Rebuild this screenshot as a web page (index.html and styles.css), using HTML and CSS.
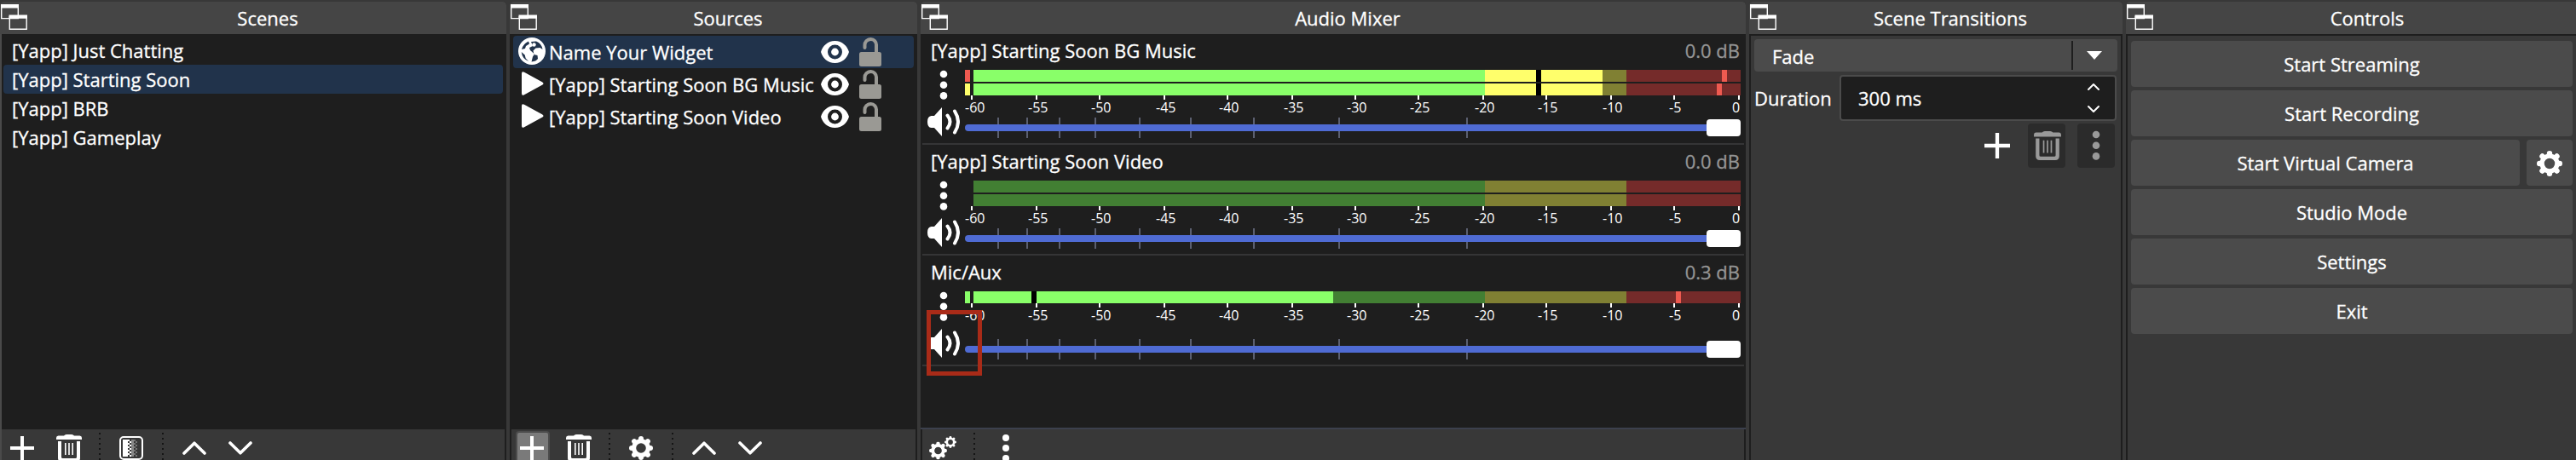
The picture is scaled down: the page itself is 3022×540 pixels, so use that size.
FILE: index.html
```html
<!DOCTYPE html>
<html lang="en">
<head>
<meta charset="utf-8">
<title>Docks</title>
<link rel="stylesheet" href="styles.css">
</head>
<body>
<svg class="defs" width="0" height="0">
  <defs>
    <symbol id="float" viewBox="0 0 31 30">
      <path fill="none" stroke="#fff" stroke-width="1.4" d="M.7 1v15.6H20.3V1M10.3 14v15.3H30.2V14"/>
      <path fill="#fff" d="M0 0h21v4.5H0zM9.5 12.6h21.5v4.2H9.500z"/>
    </symbol>
    <symbol id="plus" viewBox="0 0 28 28"><path fill="currentColor" d="M12 0h4v12h12v4H16v12h-4V16H0v-4h12z"/></symbol>
    <symbol id="trash" viewBox="0 0 30 32">
      <path fill="currentColor" d="M9 1.500Q10 0 12 0h6q2 0 3 1.500h6.500Q30 1.700 30 4v2H0V4q0-2.300 2.500-2.500z"/>
      <path fill="currentColor" d="M2 8h4v18.500q0 1.500 1.500 1.500h15q1.500 0 1.500-1.500V8h4v19.500q0 4.500-4.500 4.500h-17Q2 32 2 27.500z"/>
      <path stroke="currentColor" stroke-width="1.600" d="M10.800 10v14M15 10v14M19.200 10v14"/>
    </symbol>
    <symbol id="up" viewBox="0 0 28 16"><path fill="none" stroke="currentColor" stroke-width="3.600" stroke-linecap="round" stroke-linejoin="round" d="M2 14 14 2.200 26 14"/></symbol>
    <symbol id="down" viewBox="0 0 28 16"><path fill="none" stroke="currentColor" stroke-width="3.600" stroke-linecap="round" stroke-linejoin="round" d="M2 2l12 11.800L26 2"/></symbol>
    <symbol id="gear" viewBox="-15 -15 30 30">
      <circle r="8.900" fill="none" stroke="currentColor" stroke-width="5.400"/>
      <g stroke="currentColor" stroke-width="6.400" stroke-linecap="round">
        <path d="M0-11V-11.800M0 11V11.800M-11 0H-11.800M11 0H11.800M8-8l.5-.5M-8 8l-.5.500M8 8l.5.500M-8-8l-.5-.5"/>
      </g>
    </symbol>
    <symbol id="dots" viewBox="0 0 10 36"><g fill="currentColor"><circle cx="5" cy="5" r="4.300"/><circle cx="5" cy="17.700" r="4.300"/><circle cx="5" cy="30.400" r="4.300"/></g></symbol>
    <symbol id="eye" viewBox="0 0 33 26">
      <path fill="#fff" fill-rule="evenodd" d="M16.500 0C25 0 31 6 33 13 31 20 25 26 16.500 26S2 20 0 13C2 6 8 0 16.500 0zm0 4.500a8.500 8.500 0 1 0 0 17 8.500 8.500 0 0 0 0-17z"/>
      <circle cx="16.500" cy="13" r="4.400" fill="#fff"/>
    </symbol>
    <symbol id="lock" viewBox="0 0 26 34">
      <path fill="none" stroke="#9a9994" stroke-width="4" d="M6.500 12V9.500a7 7 0 0 1 7-7.500h0a6.500 6.500 0 0 1 6.500 7V18" stroke-linecap="round"/>
      <rect y="17" width="26" height="17" rx="2.500" fill="#9a9994"/>
    </symbol>
    <symbol id="play" viewBox="0 0 26 28"><path fill="#fff" d="M0 2.500Q0-1 3 .8L24 12.200q3 1.800 0 3.600L3 27.200Q0 29 0 25.500z"/></symbol>
    <symbol id="globe" viewBox="0 0 32 32">
      <circle cx="16" cy="16" r="16" fill="#fff"/>
      <path fill="#21334b" d="M4 14Q5.500 7.500 12 4.500l1 3-4 2.500-1 3zM3.700 17l4 3.500 1 4 3.500 3.500Q4.500 25 3.700 17zM15 5l6-.5Q27.500 7 28.500 14l-3-2-5 .5-3 3 1 4.500 4 1 .5 4q-2 3-7.500 3.500l1.500-6 2-3-5-4.500-1-3 4-2z"/>
      <circle cx="18.500" cy="8.500" r="2.200" fill="#fff"/>
    </symbol>
    <symbol id="speaker" viewBox="0 0 38 34">
      <path fill="#fff" d="M17 0v34L8 24H4.500Q0 23.500 0 17t4.500-7H8z"/>
      <path fill="none" stroke="#fff" stroke-width="4" stroke-linecap="round" d="M23.500 9.500q6 7.500 0 15M32 4.500q8 12.500 0 25"/>
    </symbol>
    <g id="marks"><path stroke="#fff" stroke-width="2" d="M8 0v5M84 0v5M158 0v5M234 0v5M308 0v5M384 0v5M458 0v5M532 0v5M608 0v5M682 0v5M758 0v5M832 0v5M908 0v5"/></g>
    <g id="slider">
      <path stroke="#5b5f70" stroke-width="2" d="M39 56v24M73 56v24M111 56v24M153 56v24M205 56v24M265 56v24M339 56v24M439 56v24M589 56v24"/>
      <rect y="64" width="890" height="8" rx="4" fill="#4f6bd3"/>
      <rect x="870" y="58" width="40" height="20" rx="4" fill="#fff"/>
    </g>
    <g id="dim"><path fill="#427f33" d="M10 0h600v14H10z"/><path fill="#808033" d="M610 0h166v14H610z"/><path fill="#752b2a" d="M776 0h134v14H776z"/></g>
  </defs>
</svg>
<main class="docks">
  <section class="dock scenes">
    <header class="title"><svg class="float"><use href="#float"/></svg><h2>Scenes</h2></header>
    <ul class="list">
      <li>[Yapp] Just Chatting</li>
      <li class="selected">[Yapp] Starting Soon</li>
      <li>[Yapp] BRB</li>
      <li>[Yapp] Gameplay</li>
    </ul>
    <footer class="toolbar">
      <svg class="i-plus"><use href="#plus"/></svg>
      <svg class="i-trash"><use href="#trash"/></svg>
      <i class="sep"></i>
      <svg class="i-filter" viewBox="0 0 28 28">
        <rect x="1" y="1" width="26" height="26" rx="4" fill="none" stroke="#fff" stroke-width="2"/>
        <path fill="#fff" d="M4 4h6v20H4z"/>
        <path stroke="#fff" stroke-width="2" stroke-dasharray="2 2" d="M11 4v20M13 6v18"/>
        <path stroke="#888" stroke-width="3" d="M15.500 4v20"/>
        <path stroke="#777" stroke-width="2" stroke-dasharray="2 2" d="M18 4v20M20 6v18"/>
      </svg>
      <i class="sep"></i>
      <svg class="i-chev"><use href="#up"/></svg>
      <svg class="i-chev"><use href="#down"/></svg>
    </footer>
  </section>

  <section class="dock sources">
    <header class="title"><svg class="float"><use href="#float"/></svg><h2>Sources</h2></header>
    <ul class="list">
      <li class="selected"><svg class="globe"><use href="#globe"/></svg><span>Name Your Widget</span><svg class="eye"><use href="#eye"/></svg><svg class="lock"><use href="#lock"/></svg></li>
      <li><svg class="play"><use href="#play"/></svg><span>[Yapp] Starting Soon BG Music</span><svg class="eye"><use href="#eye"/></svg><svg class="lock"><use href="#lock"/></svg></li>
      <li><svg class="play"><use href="#play"/></svg><span>[Yapp] Starting Soon Video</span><svg class="eye"><use href="#eye"/></svg><svg class="lock"><use href="#lock"/></svg></li>
    </ul>
    <footer class="toolbar">
      <div class="pressed"><svg class="i-plus"><use href="#plus"/></svg></div>
      <svg class="i-trash"><use href="#trash"/></svg>
      <i class="sep"></i>
      <svg class="i-gear"><use href="#gear"/></svg>
      <i class="sep"></i>
      <svg class="i-chev"><use href="#up"/></svg>
      <svg class="i-chev"><use href="#down"/></svg>
    </footer>
  </section>

  <section class="dock mixer">
    <header class="title"><svg class="float"><use href="#float"/></svg><h2>Audio Mixer</h2></header>
    <div class="channels">
      <article class="channel">
        <div class="name"><span>[Yapp] Starting Soon BG Music</span><span class="db">0.0 dB</span></div>
        <div class="body">
          <div class="side"><svg class="dots"><use href="#dots"/></svg><svg class="speaker"><use href="#speaker"/></svg></div>
          <svg class="meter" viewBox="0 0 910 86">
            <use href="#dim"/><use href="#dim" y="16"/>
            <path fill="#ee5a50" d="M0 0h6v14H0zM888 0h6v14h-6zM882 16h6v14h-6z"/>
            <path fill="#ffff6b" d="M0 16h6v14H0zM610 0h138v14H610zM610 16h138v14H610z"/>
            <path fill="#89ff69" d="M10 0h600v14H10zM10 16h600v14H10z"/>
            <path d="M670 0h6v14h-6zM670 16h6v14h-6z"/>
            <use href="#marks" y="30"/>
            <g class="labels"><text x="0" y="50">-60</text><text x="74" y="50">-55</text><text x="148" y="50">-50</text><text x="224" y="50">-45</text><text x="298" y="50">-40</text><text x="374" y="50">-35</text><text x="448" y="50">-30</text><text x="522" y="50">-25</text><text x="598" y="50">-20</text><text x="672" y="50">-15</text><text x="748" y="50">-10</text><text x="826" y="50">-5</text><text x="900" y="50">0</text></g>
            <use href="#slider"/>
          </svg>
        </div>
      </article>
      <article class="channel">
        <div class="name"><span>[Yapp] Starting Soon Video</span><span class="db">0.0 dB</span></div>
        <div class="body">
          <div class="side"><svg class="dots"><use href="#dots"/></svg><svg class="speaker"><use href="#speaker"/></svg></div>
          <svg class="meter" viewBox="0 0 910 86">
            <use href="#dim"/><use href="#dim" y="16"/>
            <use href="#marks" y="30"/>
            <g class="labels"><text x="0" y="50">-60</text><text x="74" y="50">-55</text><text x="148" y="50">-50</text><text x="224" y="50">-45</text><text x="298" y="50">-40</text><text x="374" y="50">-35</text><text x="448" y="50">-30</text><text x="522" y="50">-25</text><text x="598" y="50">-20</text><text x="672" y="50">-15</text><text x="748" y="50">-10</text><text x="826" y="50">-5</text><text x="900" y="50">0</text></g>
            <use href="#slider"/>
          </svg>
        </div>
      </article>
      <article class="channel">
        <div class="name"><span>Mic/Aux</span><span class="db">0.3 dB</span></div>
        <div class="body">
          <div class="side"><svg class="dots"><use href="#dots"/></svg><svg class="speaker"><use href="#speaker"/></svg></div>
          <svg class="meter" viewBox="0 0 910 86">
            <use href="#dim"/>
            <path fill="#89ff69" d="M0 0h6v14H0zM10 0h422v14H10z"/>
            <path d="M78 0h6v14h-6z"/>
            <path fill="#ee5a50" d="M834 0h6v14h-6z"/>
            <use href="#marks" y="14"/>
            <g class="labels"><text x="0" y="34">-60</text><text x="74" y="34">-55</text><text x="148" y="34">-50</text><text x="224" y="34">-45</text><text x="298" y="34">-40</text><text x="374" y="34">-35</text><text x="448" y="34">-30</text><text x="522" y="34">-25</text><text x="598" y="34">-20</text><text x="672" y="34">-15</text><text x="748" y="34">-10</text><text x="826" y="34">-5</text><text x="900" y="34">0</text></g>
            <use href="#slider"/>
          </svg>
          <span class="highlight"></span>
        </div>
      </article>
    </div>
    <footer class="toolbar">
      <svg class="i-gears" viewBox="0 0 32 28"><use href="#gear" x="0" y="6.500" width="21" height="21"/><use href="#gear" x="18" y="0" width="14" height="14"/></svg>
      <i class="sep"></i>
      <svg class="i-dots" viewBox="0 0 8 32"><g fill="#fff"><circle cx="4" cy="4" r="4"/><circle cx="4" cy="16" r="4"/><circle cx="4" cy="28" r="4"/></g></svg>
    </footer>
  </section>

  <section class="dock transitions">
    <header class="title"><svg class="float"><use href="#float"/></svg><h2>Scene Transitions</h2></header>
    <div class="panel">
      <div class="combo"><span>Fade</span><svg class="arrow" viewBox="0 0 18 10"><path fill="#fff" d="M0 0h18L9 10z"/></svg></div>
      <div class="duration"><label>Duration</label>
        <div class="spin"><span>300 ms</span>
          <svg class="steps" viewBox="0 0 16 36"><path fill="none" stroke="#fff" stroke-width="2" stroke-linecap="round" stroke-linejoin="round" d="M2 8l6-6 6 6M2 28l6 6 6-6"/></svg>
        </div>
      </div>
      <div class="actions">
        <svg class="add"><use href="#plus"/></svg>
        <span class="off"><svg class="bin"><use href="#trash"/></svg></span>
        <span class="off"><svg class="more"><use href="#dots"/></svg></span>
      </div>
    </div>
  </section>

  <section class="dock controls">
    <header class="title"><svg class="float"><use href="#float"/></svg><h2>Controls</h2></header>
    <div class="panel">
      <button>Start Streaming</button>
      <button>Start Recording</button>
      <div class="pair"><button>Start Virtual Camera</button><button class="cfg"><svg><use href="#gear"/></svg></button></div>
      <button>Studio Mode</button>
      <button>Settings</button>
      <button>Exit</button>
    </div>
  </section>
</main>
</body>
</html>
```
FILE: styles.css
```css
* { box-sizing: border-box; margin: 0; padding: 0; }
body {
  width: 3022px; height: 540px; overflow: hidden;
  background: #383838; color: #fff;
  font: 22px/30px "Open Sans", "Noto Sans", sans-serif;
  -webkit-text-stroke: .3px;
}
svg { display: block; flex: none; color: #fff; }
.defs { position: absolute; }
.docks {
  display: grid; height: 540px; padding-top: 2px; column-gap: 4px;
  grid-template-columns: 594px 478px 968px 438px 532px;
}
.dock { display: flex; flex-direction: column; min-width: 0; background: #1e1e1e; border-radius: 4px 4px 0 0; }
.title { display: flex; height: 38px; background: #454545; border-radius: 4px 4px 0 0; padding-left: 1px; }
.title h2 { flex: 1; font-size: 22px; font-weight: 400; line-height: 39px; text-align: center; padding-left: 2px; }
.float { width: 31px; height: 30px; margin-top: 3px; }

.list { list-style: none; flex: 1; padding: 2px 4px 0; }
.scenes .list { border-left: 2px solid #4a4a4a; padding-left: 2px; }
.scenes li { height: 34px; line-height: 35px; padding-left: 10px; border-radius: 4px; }
.sources li { display: flex; align-items: center; height: 38px; border-radius: 4px; padding-left: 6px; }
.list .selected { background: #21334b; }
.sources li span { width: 319px; margin-left: 4px; white-space: nowrap; }
.globe { width: 32px; height: 32px; margin-top: -3px; }
.play { width: 26px; height: 28px; margin: -2px 2px 0 4px; }
.eye { width: 33px; height: 26px; }
.lock { width: 26px; height: 34px; margin-left: 12px; }

.toolbar { display: flex; height: 36px; margin: 0 2px; padding-top: 4px; background: #383838; overflow: hidden; }
.scenes .toolbar { padding-left: 10px; margin-left: 0; border-left: 2px solid #4a4a4a; }
.i-plus { width: 28px; height: 28px; margin-top: 4px; }
.i-trash { width: 30px; height: 32px; margin: 2px 20px 0 26px; }
.sep { width: 2px; height: 32px; background: repeating-linear-gradient(#141414 0 2px, transparent 2px 6px); }
.i-filter { width: 28px; height: 28px; margin: 4px 22px 0; }
.i-gear { width: 28px; height: 28px; margin: 4px 22px 0; }
.i-chev { width: 28px; height: 16px; margin: 10px 4px 0 22px; }
.pressed { width: 40px; height: 40px; margin: -2px -7px 0 5px; background: #7a7a7a; border: 2px solid #4c4c4c; border-radius: 4px; padding-left: 3px; flex: none; }

.channels { flex: 1; border-bottom: 2px solid #3c404d; }
.channel { height: 130px; margin: 0 2px; border-bottom: 2px solid #353536; }
.name { display: flex; justify-content: space-between; height: 42px; padding: 0 5px 0 10px; line-height: 39px; }
.db { color: #949494; }
.body { display: flex; position: relative; }
.side { width: 50px; }
.dots { width: 10px; height: 36px; margin-left: 20px; }
.speaker { width: 38px; height: 34px; margin: 8px 0 0 6px; }
.meter { width: 910px; height: 86px; }
.labels { font-size: 16px; fill: #fff; }
.highlight { position: absolute; left: 5px; top: 22px; width: 65px; height: 77px; border: 5px solid #a92b18; z-index: 1; }
.mixer .toolbar { padding-left: 8px; }
.i-gears { width: 32px; height: 28px; margin: 4px 20px 0 0; }
.i-dots { width: 8px; height: 32px; margin: 2px 0 0 32px; }

.panel { flex: 1; margin: 2px 2px 0; background: #383838; }
.transitions .panel { padding: 4px; }
.combo { display: flex; align-items: center; height: 38px; background: linear-gradient(90deg, transparent 372px, #1e1e1e 372px 374px, transparent 374px) 0 2px / 100% 34px no-repeat #4b4b4b; border-radius: 4px; padding: 1px 18px 0 21px; justify-content: space-between; }
.arrow { width: 18px; height: 10px; margin-top: -2px; }
.duration { display: flex; align-items: center; margin-top: 4px; height: 54px; }
.duration label { width: 100px; }
.spin { display: flex; justify-content: space-between; align-items: center; width: 325px; height: 54px; background: #1e1e1e; border: 2px solid #4b4b4b; border-radius: 4px; padding: 0 17px 0 20px; }
.steps { width: 16px; height: 36px; }
.actions { display: flex; justify-content: flex-end; margin: 3px 3px 0 0; }
.add { width: 30px; height: 30px; margin: 11px 21px 0 0; }
.off { display: flex; justify-content: center; width: 44px; height: 52px; background: #2b2b2b; border-radius: 4px; }
.off + .off { margin-left: 14px; }
.off svg { color: #999; }
.bin { width: 32px; height: 34px; margin: 9px 0 0 2px; }
.more { width: 10px; height: 36px; margin-top: 8px; }

.controls .panel { display: flex; flex-direction: column; gap: 4px; padding: 6px 6px 0 4px; }
button { flex: none; height: 54px; width: 100%; border: 0; border-radius: 4px; background: #4b4b4b; color: #fff; font: inherit; -webkit-text-stroke: inherit; }
.pair { display: flex; gap: 8px; }
.pair button { width: 456px; }
.pair .cfg { width: 54px; padding: 2px 12px 0; }
.cfg svg { width: 30px; height: 30px; }
```
